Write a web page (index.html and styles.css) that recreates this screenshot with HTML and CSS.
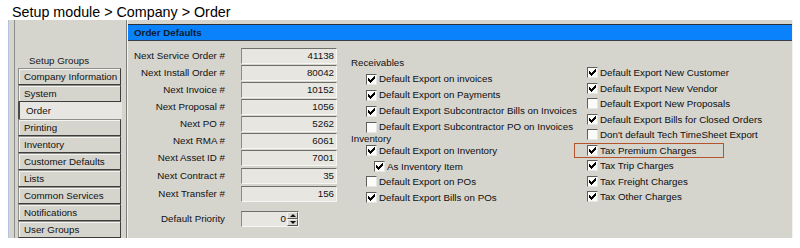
FILE: index.html
```html
<!DOCTYPE html>
<html>
<head>
<meta charset="utf-8">
<title>Order Defaults</title>
<link rel="stylesheet" href="styles.css">
</head>
<body>
<div class="title">Setup module &gt; Company &gt; Order</div>
<div class="window">
  <div class="sidebar">
    <div class="sidebar-inner">
      <div class="groups-label">Setup Groups</div>
      <div class="btn">Company Information</div>
      <div class="btn">System</div>
      <div class="btn selected">Order</div>
      <div class="btn">Printing</div>
      <div class="btn">Inventory</div>
      <div class="btn">Customer Defaults</div>
      <div class="btn">Lists</div>
      <div class="btn">Common Services</div>
      <div class="btn">Notifications</div>
      <div class="btn">User Groups</div>
    </div>
  </div>
  <div class="main">
    <div class="header">Order Defaults</div>
    <div class="body">
      <div class="form">
        <div class="row"><span class="lbl">Next Service Order #</span><span class="input">41138</span></div>
        <div class="row"><span class="lbl">Next Install Order #</span><span class="input">80042</span></div>
        <div class="row"><span class="lbl">Next Invoice #</span><span class="input">10152</span></div>
        <div class="row"><span class="lbl">Next Proposal #</span><span class="input">1056</span></div>
        <div class="row"><span class="lbl">Next PO #</span><span class="input">5262</span></div>
        <div class="row"><span class="lbl">Next RMA #</span><span class="input">6061</span></div>
        <div class="row"><span class="lbl">Next Asset ID #</span><span class="input">7001</span></div>
        <div class="row row-gap1"><span class="lbl">Next Contract #</span><span class="input">35</span></div>
        <div class="row row-gap1"><span class="lbl">Next Transfer #</span><span class="input">156</span></div>
        <div class="row row-priority"><span class="lbl">Default Priority</span>
          <span class="spin"><span class="spin-val">0</span><span class="spin-btns"><span class="spin-btn"><span class="tri-up"></span></span><span class="spin-btn"><span class="tri-down"></span></span></span></span>
        </div>
      </div>

      <div class="col1">
        <div class="group-lbl r16">Receivables</div>
        <div class="chk r16 ind"><span class="box on"><svg viewBox="0 0 7 7" width="7" height="7"><path d="M6 0h1v1h-1z M5 1h2v1h-2z M0 2h1v1h-1z M4 2h3v1h-3z M0 3h2v1h-2z M3 3h3v1h-3z M0 4h5v1h-5z M1 5h3v1h-3z M2 6h1v1h-1z"/></svg></span><span>Default Export on invoices</span></div>
        <div class="chk r16 ind"><span class="box on"><svg viewBox="0 0 7 7" width="7" height="7"><path d="M6 0h1v1h-1z M5 1h2v1h-2z M0 2h1v1h-1z M4 2h3v1h-3z M0 3h2v1h-2z M3 3h3v1h-3z M0 4h5v1h-5z M1 5h3v1h-3z M2 6h1v1h-1z"/></svg></span><span>Default Export on Payments</span></div>
        <div class="chk r16 ind"><span class="box on"><svg viewBox="0 0 7 7" width="7" height="7"><path d="M6 0h1v1h-1z M5 1h2v1h-2z M0 2h1v1h-1z M4 2h3v1h-3z M0 3h2v1h-2z M3 3h3v1h-3z M0 4h5v1h-5z M1 5h3v1h-3z M2 6h1v1h-1z"/></svg></span><span>Default Export Subcontractor Bills on Invoices</span></div>
        <div class="chk r16 ind"><span class="box"></span><span>Default Export Subcontractor PO on Invoices</span></div>
        <div class="group-lbl r8">Inventory</div>
        <div class="chk r15 ind"><span class="box on"><svg viewBox="0 0 7 7" width="7" height="7"><path d="M6 0h1v1h-1z M5 1h2v1h-2z M0 2h1v1h-1z M4 2h3v1h-3z M0 3h2v1h-2z M3 3h3v1h-3z M0 4h5v1h-5z M1 5h3v1h-3z M2 6h1v1h-1z"/></svg></span><span>Default Export on Inventory</span></div>
        <div class="chk r15 ind2"><span class="box on"><svg viewBox="0 0 7 7" width="7" height="7"><path d="M6 0h1v1h-1z M5 1h2v1h-2z M0 2h1v1h-1z M4 2h3v1h-3z M0 3h2v1h-2z M3 3h3v1h-3z M0 4h5v1h-5z M1 5h3v1h-3z M2 6h1v1h-1z"/></svg></span><span>As Inventory Item</span></div>
        <div class="chk r15 ind"><span class="box"></span><span>Default Export on POs</span></div>
        <div class="chk r15 ind"><span class="box on"><svg viewBox="0 0 7 7" width="7" height="7"><path d="M6 0h1v1h-1z M5 1h2v1h-2z M0 2h1v1h-1z M4 2h3v1h-3z M0 3h2v1h-2z M3 3h3v1h-3z M0 4h5v1h-5z M1 5h3v1h-3z M2 6h1v1h-1z"/></svg></span><span>Default Export Bills on POs</span></div>
      </div>

      <div class="col2">
        <div class="chk r15"><span class="box on"><svg viewBox="0 0 7 7" width="7" height="7"><path d="M6 0h1v1h-1z M5 1h2v1h-2z M0 2h1v1h-1z M4 2h3v1h-3z M0 3h2v1h-2z M3 3h3v1h-3z M0 4h5v1h-5z M1 5h3v1h-3z M2 6h1v1h-1z"/></svg></span><span>Default Export New Customer</span></div>
        <div class="chk r15"><span class="box on"><svg viewBox="0 0 7 7" width="7" height="7"><path d="M6 0h1v1h-1z M5 1h2v1h-2z M0 2h1v1h-1z M4 2h3v1h-3z M0 3h2v1h-2z M3 3h3v1h-3z M0 4h5v1h-5z M1 5h3v1h-3z M2 6h1v1h-1z"/></svg></span><span>Default Export New Vendor</span></div>
        <div class="chk r15"><span class="box"></span><span>Default Export New Proposals</span></div>
        <div class="chk r15"><span class="box on"><svg viewBox="0 0 7 7" width="7" height="7"><path d="M6 0h1v1h-1z M5 1h2v1h-2z M0 2h1v1h-1z M4 2h3v1h-3z M0 3h2v1h-2z M3 3h3v1h-3z M0 4h5v1h-5z M1 5h3v1h-3z M2 6h1v1h-1z"/></svg></span><span>Default Export Bills for Closed Orders</span></div>
        <div class="chk r15"><span class="box"></span><span>Don't default Tech TimeSheet Export</span></div>
        <div class="chk r15 highlight"><span class="box on"><svg viewBox="0 0 7 7" width="7" height="7"><path d="M6 0h1v1h-1z M5 1h2v1h-2z M0 2h1v1h-1z M4 2h3v1h-3z M0 3h2v1h-2z M3 3h3v1h-3z M0 4h5v1h-5z M1 5h3v1h-3z M2 6h1v1h-1z"/></svg></span><span>Tax Premium Charges</span><span class="mark"></span></div>
        <div class="chk r15"><span class="box on"><svg viewBox="0 0 7 7" width="7" height="7"><path d="M6 0h1v1h-1z M5 1h2v1h-2z M0 2h1v1h-1z M4 2h3v1h-3z M0 3h2v1h-2z M3 3h3v1h-3z M0 4h5v1h-5z M1 5h3v1h-3z M2 6h1v1h-1z"/></svg></span><span>Tax Trip Charges</span></div>
        <div class="chk r15"><span class="box on"><svg viewBox="0 0 7 7" width="7" height="7"><path d="M6 0h1v1h-1z M5 1h2v1h-2z M0 2h1v1h-1z M4 2h3v1h-3z M0 3h2v1h-2z M3 3h3v1h-3z M0 4h5v1h-5z M1 5h3v1h-3z M2 6h1v1h-1z"/></svg></span><span>Tax Freight Charges</span></div>
        <div class="chk r15"><span class="box on"><svg viewBox="0 0 7 7" width="7" height="7"><path d="M6 0h1v1h-1z M5 1h2v1h-2z M0 2h1v1h-1z M4 2h3v1h-3z M0 3h2v1h-2z M3 3h3v1h-3z M0 4h5v1h-5z M1 5h3v1h-3z M2 6h1v1h-1z"/></svg></span><span>Tax Other Charges</span></div>
      </div>
    </div>
  </div>
</div>
</body>
</html>
```

FILE: styles.css
```css
* { box-sizing: border-box; }

body {
  margin: 0;
  background: #ffffff;
  font-family: "Liberation Sans", Arial, sans-serif;
  font-size: 9.75px;
  color: #0e0e0e;
}

.title {
  height: 20px;
  padding-top: 4px;
  padding-left: 12px;
  font-size: 14.3px;
  line-height: 16px;
  color: #000;
}

.window {
  display: flex;
  margin-left: 8px;
  width: 785px;
  height: 218px;
  background: #d5d4cd;
  border-left: 1px solid #b3c3de;
  overflow: hidden;
}

/* ---------- sidebar ---------- */
.sidebar {
  width: 118px;
  padding-left: 5px;
  display: flex;
}

.sidebar-inner {
  flex: 1;
  border-left: 1px solid #8c8c88;
  border-right: 1px solid #7d7d79;
  padding: 34px 4px 0 3px;
  display: flex;
  flex-direction: column;
}

.groups-label {
  height: 14px;
  line-height: 13px;
  padding-left: 11px;
  color: #1a1a1a;
}

.btn {
  width: 103px;
  height: 17px;
  line-height: 15px;
  padding-left: 5px;
  border: 1px solid #8e8e8a;
  border-right-color: #3d3d3b;
  border-bottom-color: #3d3d3b;
  box-shadow: inset 1px 1px 0 #f4f4f1;
  color: #111;
  white-space: nowrap;
}

.btn.selected {
  background: #e7e6e2;
  border: none;
  border-left: 2px solid #4a4a48;
  box-shadow: none;
  width: 104px;
  padding-left: 6px;
  line-height: 17px;
}

/* ---------- main ---------- */
.main {
  flex: 1;
  display: flex;
  flex-direction: column;
  border-left: 1px solid #f2f2ef;
  border-right: 1px solid #f2f2ef;
}

.header {
  margin-top: 4px;
  height: 17px;
  background: #0a82fb;
  border-top: 1px solid #2b2f38;
  border-bottom: 1px solid #3a3e46;
  padding-left: 6px;
  line-height: 15px;
  font-weight: bold;
  color: #0d1a30;
}

.body {
  display: flex;
}

/* ---------- form ---------- */
.form {
  width: 209px;
  padding-top: 7px;
  display: flex;
  flex-direction: column;
}

.row {
  display: flex;
  height: 17px;
  column-gap: 16px;
}

.row-gap1 { margin-top: 1px; }
.row-priority { margin-top: 8px; }

.lbl {
  width: 97px;
  text-align: right;
  line-height: 16px;
  white-space: nowrap;
  color: #111;
}

.input {
  width: 96px;
  height: 16px;
  background: #e7e6e1;
  border-top: 1px solid #6e6e6b;
  border-left: 1px solid #8a8a86;
  border-bottom: 1px solid #f6f6f3;
  border-right: 1px solid #f6f6f3;
  text-align: right;
  padding-right: 2px;
  line-height: 14px;
  color: #111;
}

.spin {
  width: 58px;
  height: 16px;
  display: flex;
  background: #e7e6e1;
  border-top: 1px solid #6e6e6b;
  border-left: 1px solid #8a8a86;
  border-bottom: 1px solid #f6f6f3;
  border-right: 1px solid #f6f6f3;
}

.spin-val {
  flex: 1;
  text-align: right;
  padding-right: 1px;
  line-height: 14px;
}

.spin-btns {
  width: 11px;
  display: flex;
  flex-direction: column;
}

.spin-btn {
  flex: 1;
  background: #d8d7d1;
  border: 1px solid #f2f2ef;
  border-right-color: #555;
  border-bottom-color: #555;
  display: flex;
  align-items: center;
  justify-content: center;
}

.tri-up {
  width: 0; height: 0;
  border-left: 3px solid transparent;
  border-right: 3px solid transparent;
  border-bottom: 3px solid #111;
}

.tri-down {
  width: 0; height: 0;
  border-left: 3px solid transparent;
  border-right: 3px solid transparent;
  border-top: 3px solid #111;
}

/* ---------- checkbox columns ---------- */
.col1 {
  width: 236px;
  margin-left: 14px;
  padding-top: 14px;
  display: flex;
  flex-direction: column;
}

.col2 {
  flex: 1;
  padding-top: 24px;
  display: flex;
  flex-direction: column;
}

.r16 { height: 16px; line-height: 16px; }
.r15 { height: 15.5px; line-height: 15.5px; }
.r8 { height: 8px; line-height: 8px; }

.group-lbl {
  color: #111;
  white-space: nowrap;
}

.chk {
  display: flex;
  align-items: center;
  column-gap: 2px;
  white-space: nowrap;
  color: #0e0e0e;
}

.chk.ind { padding-left: 15px; }
.chk.ind2 { padding-left: 23px; }

.box {
  width: 11px;
  height: 11px;
  flex: none;
  background: #fbfbfa;
  border-top: 1px solid #5e5e5b;
  border-left: 1px solid #5e5e5b;
  border-bottom: 1px solid #e6e6e2;
  border-right: 1px solid #e6e6e2;
  display: flex;
  align-items: center;
  justify-content: center;
}

.box svg {
  display: block;
  fill: #000;
  shape-rendering: crispEdges;
}

.highlight { position: relative; }

.mark {
  position: absolute;
  left: -13px;
  top: 0;
  width: 150px;
  height: 15.5px;
  border: 1.5px solid #b5532c;
}
```
